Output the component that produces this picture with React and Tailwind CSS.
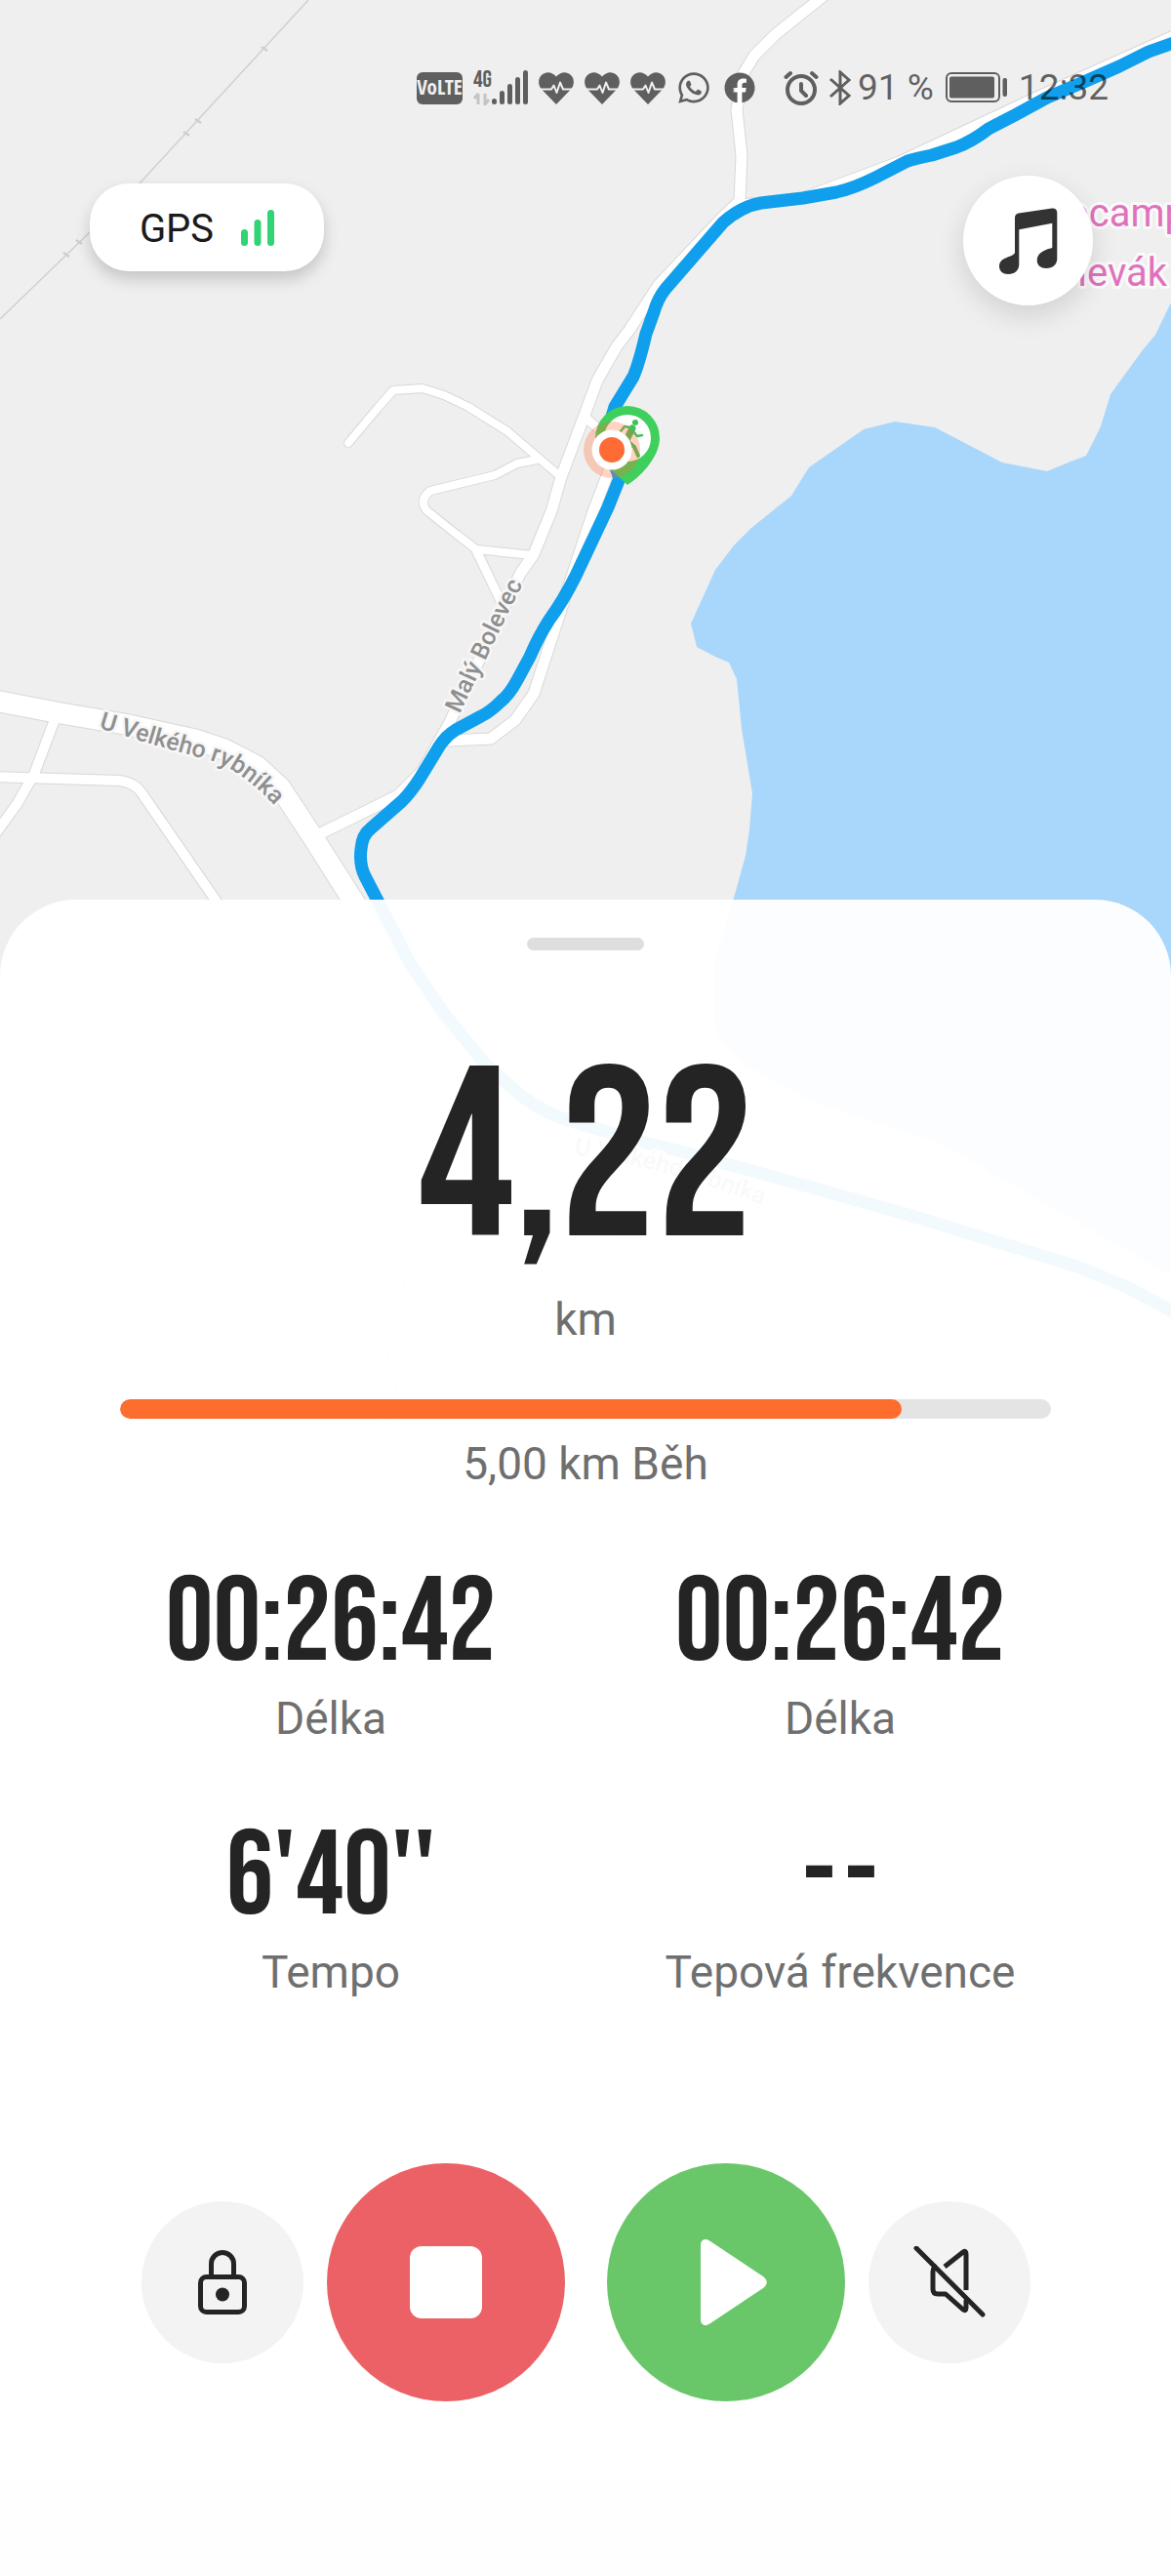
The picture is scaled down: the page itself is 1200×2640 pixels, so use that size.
import { FaWhatsapp, FaFacebook } from "react-icons/fa";

const ROADS = [
  { w: 21, d: "M-5 718 L57 730 L127 742 L200 758 L230 768 L263 785 L287 807 L320 857 L360 920 L400 985 L460 1080 L520 1145 L590 1180 L760 1225 L930 1280 L1210 1385" },
  { w: 10, d: "M-5 796 L123 800 Q137 802 144 811 L235 943" },
  { w: 10, d: "M57 735 L35 793 L18 823 L-5 855" },
  { w: 11, d: "M325 856 L408 815 L433 790 L460 742 L533 588 L547 568 L565 524 L575 489 L598 428 L612 390 L632 355 L645 338 L675 292 L741 222 L758 206 L760 160 L755 112 L762 75 L773 57 L795 35 L845 -5" },
  { w: 11, d: "M760 210 L823 203 L922 166 L1060 101 L1205 36" },
  { w: 8, d: "M357 454 L388 417 L403 400 L433 398 L455 405 L480 417 L520 442 L548 466 L575 489" },
  { w: 8, d: "M550 471 L530 475 L507 487 L441 503 Q429 512 437 523 L467 547 L488 563 L545 569" },
  { w: 9, d: "M488 564 L515 620" },
  { w: 9, d: "M600 428 L622 447" },
  { w: 11, d: "M625 480 L608 524 L583 600 L547 711 L528 738 L503 757 L460 759" },
  { w: 9, d: "M430 1080 L410 1300 L395 1500" },
  { w: 9, d: "M660 1210 L610 1400 L600 1600 L640 1700" },
];

const TRACK =
  "M1205 43 L1177 53 L1147 68 L1113 83 L1073 100 L1040 118 L1013 132 Q996 145 980 151 L955 159 Q940 162 930 165 L897 182 Q875 193 857 197 L823 203 L780 208 Q760 211 741 228 L682 296 Q674 306 670 320 L662 342 Q655 372 649 386 L630 417 L620 450 L635 490 L623 520 L590 590 Q577 616 563 635 Q552 652 543 673 L530 697 Q522 712 513 719 Q503 729 493 734 L467 748 Q457 754 450 765 L430 798 Q421 812 412 821 L380 849 Q371 856 370 870 Q368 886 374 898 L388 925 L420 987 L456 1040 L497 1090 L533 1122 Q560 1143 589 1150 L645 1167 L706 1182 L839 1219 L931 1245 L1104 1298 L1155 1319 L1205 1346";

const LAKE =
  "M1200 310 L1184 343 L1170 360 L1138 404 L1128 437 L1113 467 L1097 473 L1073 483 L1027 474 L958 438 L917 432 L885 440 L829 479 L811 508 L770 541 L752 559 L733 584 L708 639 L714 663 L733 673 L747 679 L755 696 L760 747 L771 813 L768 850 L764 877 L752 920 L732 987 L733 1057 L757 1087 L834 1130 L961 1170 L1200 1307 Z";

const TICKS = [
  [271, 50],
  [203, 124],
  [191, 137],
  [81, 248],
  [68, 261],
];

function RouteMap() {
  return (
    <svg
      viewBox="0 0 1200 2640"
      preserveAspectRatio="xMidYMin slice"
      className="absolute inset-0 h-full w-full font-['Roboto',sans-serif]"
      role="img"
      aria-label="Mapa trasy"
    >
      <defs>
        <path id="label-bolevec" d="M471 732 Q507 655 545 580" />
        <path id="label-rybnika" d="M101 746 L160 764 L218 780 Q254 792 296 842" />
        <path id="label-rybnika-2" d="M588 1183 Q680 1195 800 1242" />
      </defs>
      <path d={LAKE} fill="#a9d7fb" />
      <path d="M316 0 L143 188 L92 238 L0 327" fill="none" stroke="#d0d0d0" strokeWidth="1.5" />
      {TICKS.map(([x, y]) => (
        <path key={x} d={`M${x - 3} ${y - 2} L${x + 3} ${y + 2}`} stroke="#cfcfcf" strokeWidth="2.5" />
      ))}
      <g fill="none" strokeLinejoin="round" strokeLinecap="round">
        {ROADS.map((r) => (
          <path key={r.d} d={r.d} stroke="#d8d8d8" strokeWidth={r.w + 2} />
        ))}
        {ROADS.map((r) => (
          <path key={r.d} d={r.d} stroke="#ffffff" strokeWidth={r.w} />
        ))}
        <path d={TRACK} stroke="#109fec" strokeWidth="13" strokeLinecap="butt" />
      </g>
      <g fontSize="25" fontWeight="500" fill="#8f8f8f" stroke="#f7f7f7" strokeWidth="5" strokeLinejoin="round" style={{ paintOrder: "stroke" }}>
        <text><textPath href="#label-bolevec">Malý Bolevec</textPath></text>
        <text><textPath href="#label-rybnika">U Velkého rybníka</textPath></text>
        <text><textPath href="#label-rybnika-2">U Velkého rybníka</textPath></text>
      </g>
      <g fontSize="40" fill="#e072bc" stroke="#fafafa" strokeWidth="6" strokeLinejoin="round" style={{ paintOrder: "stroke" }}>
        <text x="1216" y="232" textAnchor="end">Autocamp</text>
        <text x="1196" y="293" textAnchor="end">Bolevák</text>
      </g>
      <g>
        <path d="M643 497 C634 488 610 470 610 449 A33 33 0 0 1 676 449 C676 466 660 486 643 497 Z" fill="#3fcf5c" />
        <circle cx="643" cy="449" r="24" fill="#ffffff" />
        <g fill="none" stroke="#3fc25a" strokeLinecap="round" strokeLinejoin="round">
          <circle cx="651" cy="433" r="3" fill="#3fc25a" stroke="none" />
          <path d="M648 439 L642 451" strokeWidth="7" />
          <path d="M646 438 L640 437 L636 442 M649 442 L653 447 L658 446" strokeWidth="2.5" />
          <path d="M643 452 L650 458 L654 467 M641 452 L637 460" strokeWidth="4" />
        </g>
        <circle cx="627" cy="461" r="29" fill="#ff6b35" fillOpacity="0.3" />
        <circle cx="627" cy="461" r="20.5" fill="#ffffff" />
        <circle cx="627" cy="461" r="13" fill="#ff6b35" />
      </g>
    </svg>
  );
}

function HeartIcon() {
  return (
    <svg viewBox="0 0 36 33" className="h-[33px] w-9">
      <path d="M18 33 L2.5 17 C-1 12.500 -0.500 6 3 3 C8-1.500 14 0 18 4.500 C22 0 28-1.500 33 3 C36.500 6 37 12.500 33.500 17 Z" fill="#5f5f5f" />
      <path d="M1 17.500 H13 L15.500 13.500 L18.500 21 L22 10.500 L25 17.500 H35" fill="none" stroke="#efefef" strokeWidth="2" strokeLinejoin="round" />
    </svg>
  );
}

function StatusBar() {
  return (
    <div className="flex h-9 items-center justify-end gap-[27px] pr-16 text-[#5f5f5f]">
      <div className="flex items-center gap-[11px]">
        <span className="flex h-[33px] w-[47px] items-center justify-center rounded-md bg-[#5f5f5f] font-['Open_Sans_Condensed','Roboto_Condensed','Roboto',sans-serif] text-[21px] font-bold text-[#efefef]">
          VoLTE
        </span>
        <svg viewBox="0 0 56 36" className="h-9 w-14" fill="#5f5f5f">
          <text x="0" y="17" fontSize="24" fontWeight="400" fontFamily="'Bebas Neue','Roboto Condensed',Roboto,sans-serif">4G</text>
          <path d="M5 24 V35 M5 24 L1 29 M12 24 V35 L16 30" fill="none" stroke="#c4c4c4" strokeWidth="3" />
          <rect x="19" y="29" width="5" height="6" rx="2.5" />
          <rect x="27" y="21" width="5" height="14" rx="2.5" />
          <rect x="35" y="14" width="5" height="21" rx="2.5" />
          <rect x="43" y="7" width="5" height="28" rx="2.5" />
          <rect x="51" y="0" width="5" height="35" rx="2.5" />
        </svg>
        <HeartIcon />
        <HeartIcon />
        <HeartIcon />
        <FaWhatsapp className="size-9" />
        <FaFacebook className="mx-[2px] size-8" />
      </div>
      <div className="flex items-center">
        <svg viewBox="0 0 36 36" className="size-9" fill="none" stroke="currentColor" strokeWidth="4" strokeLinecap="round">
          <circle cx="18" cy="20" r="14" />
          <path d="M18 14 V21 L23 26 M2.500 7 L7 3 M33.500 7 L29 3" />
        </svg>
        <svg viewBox="0 0 24 36" className="ml-[10px] h-9 w-6" fill="none" stroke="currentColor" strokeWidth="3">
          <path d="M2 9 L21 26 L12 34 V2 L21 10 L2 27" />
        </svg>
        <span className="ml-[6px] text-[37px] leading-9 text-black/60">91 %</span>
        <svg viewBox="0 0 63 32" className="ml-[12px] h-8 w-[63px]">
          <rect x="1" y="1" width="54" height="29" rx="5" fill="none" stroke="#5f5f5f" strokeWidth="2" />
          <rect x="4" y="4.500" width="46" height="22" rx="2" fill="#5f5f5f" />
          <rect x="58.500" y="6" width="4.500" height="19" rx="2" fill="#5f5f5f" />
        </svg>
        <span className="ml-[12px] text-[37px] leading-9 text-black/60">12:32</span>
      </div>
    </div>
  );
}

function Stat({ children, label }) {
  return (
    <div className="flex flex-col items-center">
      <span className="flex gap-[10px] font-['Bebas_Neue','Roboto_Condensed','Roboto',sans-serif] text-[122px] font-normal leading-[124px] text-[#242424]">
        {children}
      </span>
      <span className="mt-1 text-[46px] leading-[60px] text-[#6f6f6f]">{label}</span>
    </div>
  );
}

export default function App() {
  return (
    <div className="relative flex min-h-screen flex-col overflow-hidden bg-[#efefef] font-['Roboto',sans-serif]">
      <RouteMap />
      <header className="relative pt-[72px]">
        <StatusBar />
        <div className="mt-[72px] flex items-start justify-between pl-[92px] pr-20">
          <div className="mt-2 flex h-[90px] w-60 items-center justify-center gap-7 rounded-[40px] bg-white text-[40px] text-[#1b1b1b] shadow-[0_8px_16px_rgba(0,0,0,0.18)]">
            <span className="pt-1">GPS</span>
            <svg viewBox="0 0 34 37" className="h-[37px] w-[34px]" fill="#30d475">
              <rect x="0" y="20" width="7" height="17" rx="3.5" />
              <rect x="13.500" y="10" width="7" height="27" rx="3.5" />
              <rect x="27" y="0" width="7" height="37" rx="3.5" />
            </svg>
          </div>
          <button aria-label="Hudba" className="flex size-[133px] items-center justify-center rounded-full bg-white shadow-[0_10px_28px_rgba(0,0,0,0.13)]">
            <svg viewBox="0 0 60 68" className="h-[68px] w-[60px]" fill="#333333">
              <path d="M20.300 22.300 L54.300 15.700 V41 C45 43 38.700 47 38.700 54 C38.700 59 43 62 48 62 C55 62 59.300 58 59.300 52 V5 C59.300 1.500 57 0 54 .5 L20 5.500 C17.500 6 16 7.500 16 10 V46 C14 51 0 50 0 60 C0 65 4 68 9 68 C16 68 20.300 64 20.300 58 Z" />
            </svg>
          </button>
        </div>
      </header>

      <main className="relative mt-[609px] flex flex-1 flex-col items-center rounded-t-[78px] bg-white/95 pb-40">
        <div className="mt-[39px] h-[13px] w-[120px] rounded-full bg-[#dedede]" />
        <div className="mt-[94px] font-['Bebas_Neue','Roboto_Condensed','Roboto',sans-serif] text-[248px] font-normal leading-[248px] text-[#242424]">
          4,22
        </div>
        <div className="mt-[6px] text-[46px] leading-[60px] text-[#6f6f6f]">km</div>
        <div className="mt-[52px] w-full px-[123px]">
          <div
            role="progressbar"
            aria-label="5,00 km Běh"
            aria-valuenow={84}
            aria-valuemin={0}
            aria-valuemax={100}
            className="h-5 overflow-hidden rounded-full bg-[#e4e4e4]"
          >
            <div className="h-full w-[84%] rounded-full bg-[#fd6d2d]" />
          </div>
        </div>
        <div className="mt-[16px] text-[46px] leading-[60px] text-[#6f6f6f]">5,00 km Běh</div>

        <section className="mt-[73px] grid w-full grid-cols-2 gap-y-[72px] px-[78px]">
          <Stat label="Délka">00:26:42</Stat>
          <Stat label="Délka">00:26:42</Stat>
          <Stat label="Tempo">6'40''</Stat>
          <Stat label="Tepová frekvence">
            <span>-</span>
            <span>-</span>
          </Stat>
        </section>

        <div className="mt-[166px] flex items-center gap-[43px]">
          <div className="flex items-center gap-6">
            <button aria-label="Zamknout" className="flex size-[166px] items-center justify-center rounded-full bg-[#f3f3f3]">
              <svg viewBox="0 0 50 66" className="h-[66px] w-[50px]" fill="none" stroke="#242424" strokeWidth="5">
                <rect x="2.500" y="27.500" width="45" height="36" rx="6" />
                <path d="M13.500 27 V14 A11.500 11.500 0 0 1 36.500 14 V27" />
                <circle cx="25" cy="45.500" r="7" fill="#242424" stroke="none" />
              </svg>
            </button>
            <button aria-label="Ukončit" className="flex size-[244px] items-center justify-center rounded-full bg-[#eb6165]">
              <span className="size-[74px] rounded-xl bg-white" />
            </button>
          </div>
          <div className="flex items-center gap-6">
            <button aria-label="Pokračovat" className="flex size-[244px] items-center justify-center rounded-full bg-[#69c769]">
              <svg viewBox="0 0 88 88" className="size-[88px]" fill="#ffffff">
                <path d="M18 6 C18 0 23-2 28 2 L82 38 C87 42 87 46 82 50 L28 86 C23 90 18 88 18 82 Z" />
              </svg>
            </button>
            <button aria-label="Zvuk vypnut" className="flex size-[166px] items-center justify-center rounded-full bg-[#f3f3f3]">
              <svg viewBox="0 0 74 74" className="size-[74px]" fill="none" stroke="#242424" strokeWidth="5" strokeLinecap="round" strokeLinejoin="round">
                <path d="M3 2 L71 70" />
                <path d="M32 21 L51 6 Q54 4 54 8 V45" strokeLinecap="butt" />
                <path d="M22 21 Q20 23 20 26 V44 Q20 49 25 49 H33 L51 65 Q54 67 54 63 V56" />
              </svg>
            </button>
          </div>
        </div>
      </main>
    </div>
  );
}
